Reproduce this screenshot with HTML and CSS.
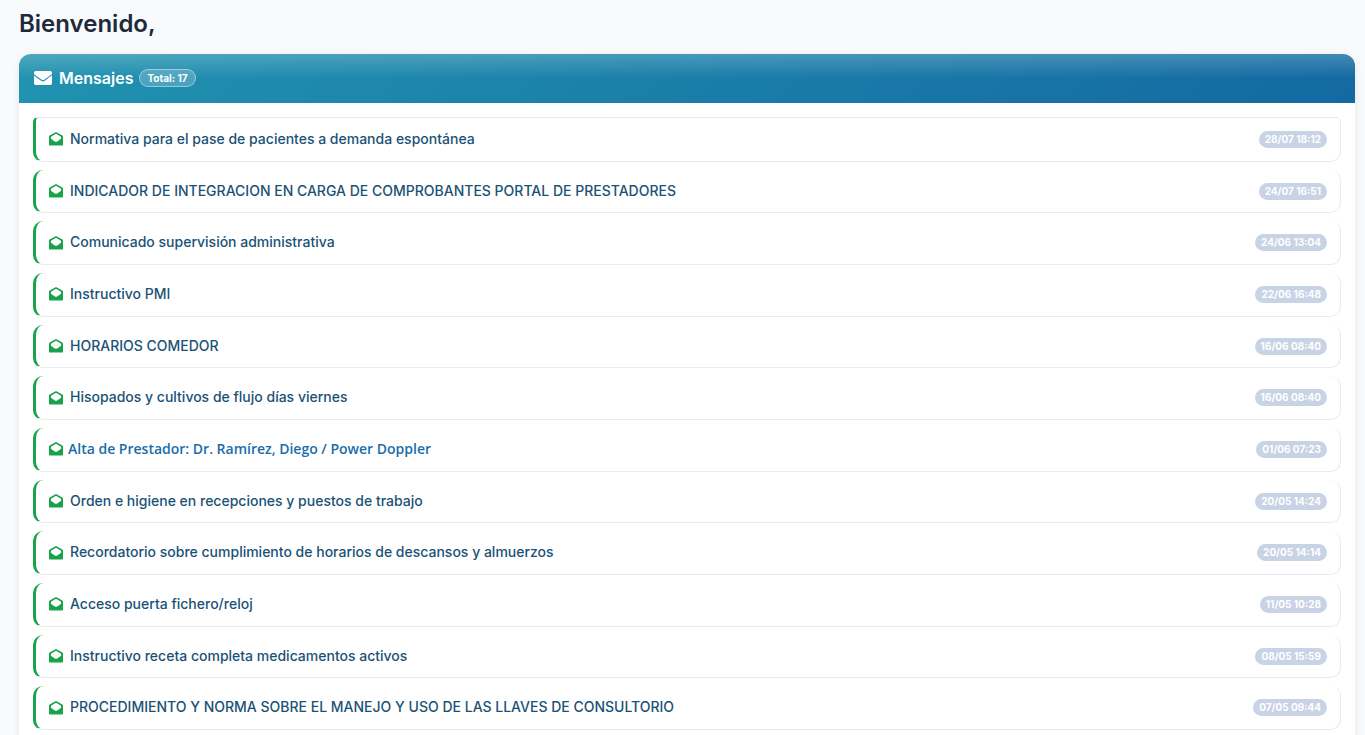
FILE: index.html
```html
<!DOCTYPE html>
<html lang="es">
<head>
    <meta charset="UTF-8">
    <meta name="viewport" content="width=device-width, initial-scale=1.0">
    <title>Mensajes</title>
    <link rel="stylesheet" href="styles.css">
</head>
<body>

    <!-- Icons shared by the list -->
    <svg class="icon-defs" aria-hidden="true">
        <symbol id="icon-open" viewBox="0 0 14 14">
            <path fill-rule="evenodd" d="M7 0 L13.3 3.6 Q14 4.1 14 4.9 V12.4 Q14 13.6 12.8 13.6 H1.2 Q0 13.6 0 12.4 V4.9 Q0 4.1 0.7 3.6 Z M7 1.8 L2.4 4.4 Q1.9 4.7 1.9 5.2 V6.7 L5.8 9.4 Q7 10 8.2 9.4 L12.1 6.7 V5.2 Q12.1 4.7 11.6 4.4 Z"/>
        </symbol>
        <symbol id="icon-mail" viewBox="0 64 512 384" preserveAspectRatio="none">
            <path d="M502.3 190.8c3.9-3.1 9.7-.2 9.7 4.7V400c0 26.5-21.5 48-48 48H48c-26.5 0-48-21.5-48-48V195.6c0-5 5.7-7.8 9.7-4.7 22.4 17.4 52.1 39.5 154.1 113.6 21.1 15.4 56.7 47.8 92.2 47.6 35.7.3 72-32.8 92.3-47.6 102-74.1 131.6-96.3 154-113.7zM256 320c23.2.4 56.6-29.2 73.4-41.4 132.7-96.3 142.8-104.7 173.4-128.7 5.8-4.5 9.2-11.5 9.2-18.9v-19c0-26.5-21.5-48-48-48H48c-26.5 0-48 21.5-48 48v19c0 7.4 3.4 14.3 9.2 18.9 30.6 23.9 40.7 32.4 173.4 128.7 16.8 12.2 50.2 41.8 73.4 41.4z"/>
        </symbol>
    </svg>

    <h1>Bienvenido,</h1>

    <div class="card">
        <div class="card-header">
            <svg class="mail-icon" aria-hidden="true"><use href="#icon-mail"/></svg>
            <h2>Mensajes</h2>
            <span class="total">Total: 17</span>
        </div>
        <ul class="messages">
            <li class="message">
                <svg class="open-icon" aria-hidden="true"><use href="#icon-open"/></svg>
                <a href="#">Normativa para el pase de pacientes a demanda espontánea</a>
                <span class="date">28/07 18:12</span>
            </li>
            <li class="message">
                <svg class="open-icon" aria-hidden="true"><use href="#icon-open"/></svg>
                <a href="#">INDICADOR DE INTEGRACION EN CARGA DE COMPROBANTES PORTAL DE PRESTADORES</a>
                <span class="date">24/07 16:51</span>
            </li>
            <li class="message">
                <svg class="open-icon" aria-hidden="true"><use href="#icon-open"/></svg>
                <a href="#">Comunicado supervisión administrativa</a>
                <span class="date">24/06 13:04</span>
            </li>
            <li class="message">
                <svg class="open-icon" aria-hidden="true"><use href="#icon-open"/></svg>
                <a href="#">Instructivo PMI</a>
                <span class="date">22/06 16:48</span>
            </li>
            <li class="message">
                <svg class="open-icon" aria-hidden="true"><use href="#icon-open"/></svg>
                <a href="#">HORARIOS COMEDOR</a>
                <span class="date">16/06 08:40</span>
            </li>
            <li class="message">
                <svg class="open-icon" aria-hidden="true"><use href="#icon-open"/></svg>
                <a href="#">Hisopados y cultivos de flujo días viernes</a>
                <span class="date">16/06 08:40</span>
            </li>
            <li class="message">
                <svg class="open-icon" aria-hidden="true"><use href="#icon-open"/></svg>
                <a href="#" class="highlight">Alta de Prestador: Dr. Ramírez, Diego / Power Doppler</a>
                <span class="date">01/06 07:23</span>
            </li>
            <li class="message">
                <svg class="open-icon" aria-hidden="true"><use href="#icon-open"/></svg>
                <a href="#">Orden e higiene en recepciones y puestos de trabajo</a>
                <span class="date">20/05 14:24</span>
            </li>
            <li class="message">
                <svg class="open-icon" aria-hidden="true"><use href="#icon-open"/></svg>
                <a href="#">Recordatorio sobre cumplimiento de horarios de descansos y almuerzos</a>
                <span class="date">20/05 14:14</span>
            </li>
            <li class="message">
                <svg class="open-icon" aria-hidden="true"><use href="#icon-open"/></svg>
                <a href="#">Acceso puerta fichero/reloj</a>
                <span class="date">11/05 10:28</span>
            </li>
            <li class="message">
                <svg class="open-icon" aria-hidden="true"><use href="#icon-open"/></svg>
                <a href="#">Instructivo receta completa medicamentos activos</a>
                <span class="date">08/05 15:59</span>
            </li>
            <li class="message">
                <svg class="open-icon" aria-hidden="true"><use href="#icon-open"/></svg>
                <a href="#">PROCEDIMIENTO Y NORMA SOBRE EL MANEJO Y USO DE LAS LLAVES DE CONSULTORIO</a>
                <span class="date">07/05 09:44</span>
            </li>
        </ul>
    </div>

</body>
</html>
```
FILE: styles.css
```css
* {
    box-sizing: border-box;
}
body {
    margin: 0;
    padding: 8px 10px 0 19px;
    font-family: Inter, "Liberation Sans", sans-serif;
    background-color: #f9fafc;
    color: #1e293b;
}
.icon-defs {
    display: none;
}
h1 {
    margin: 0 0 14px;
    font-size: 24px;
    font-weight: 600;
    line-height: 32px;
}
.card {
    border-radius: 12px 12px 0 0;
    background-color: #fff;
    box-shadow: 0 2px 8px rgba(0, 0, 0, 0.08);
}
.card-header {
    display: flex;
    align-items: center;
    height: 49px;
    padding: 0 15px 2px;
    border-radius: 12px 12px 0 0;
    background-image: linear-gradient(rgba(255, 255, 255, 0.2), rgba(255, 255, 255, 0) 50%), linear-gradient(135deg, #2193b0, #1469a2);
    color: #fff;
}
.mail-icon {
    width: 18px;
    height: 14px;
    fill: currentColor;
}
h2 {
    margin: 0 6px 0 7px;
    font-size: 16px;
    font-weight: 600;
    line-height: 24px;
}
.total {
    padding: 0 7px;
    border: 1px solid rgba(255, 255, 255, 0.4);
    border-radius: 9px;
    background-color: rgba(255, 255, 255, 0.2);
    font-size: 10px;
    font-weight: 700;
    line-height: 16px;
}
.messages {
    display: flex;
    flex-direction: column;
    gap: 8px;
    margin: 0;
    padding: 14px;
    list-style: none;
}
.message {
    display: flex;
    align-items: center;
    padding: 10px 13px;
    border: 1px solid #e8eaed;
    border-top: 0;
    border-left: 3px solid #16a34a;
    border-radius: 10px;
    font-size: 14px;
    line-height: 1.62;
}
.message:first-child {
    border-top: 1px solid #e8eaed;
    border-radius: 5px 5px 10px 10px;
}
.open-icon {
    width: 14px;
    height: 14px;
    fill: #16a34a;
}
.message a {
    margin-left: 7px;
    font-weight: 500;
    color: #1a5276;
    text-decoration: none;
}
.message a.highlight {
    margin-left: 5px;
    font-family: "Open Sans", "Noto Sans", sans-serif;
    font-weight: 600;
    color: #1b6ca8;
}
.date {
    margin-left: auto;
    padding: 0 6px;
    border-radius: 9px;
    background-color: #c8d3e5;
    color: #fff;
    font-size: 10px;
    font-weight: 700;
    line-height: 17px;
}
```
